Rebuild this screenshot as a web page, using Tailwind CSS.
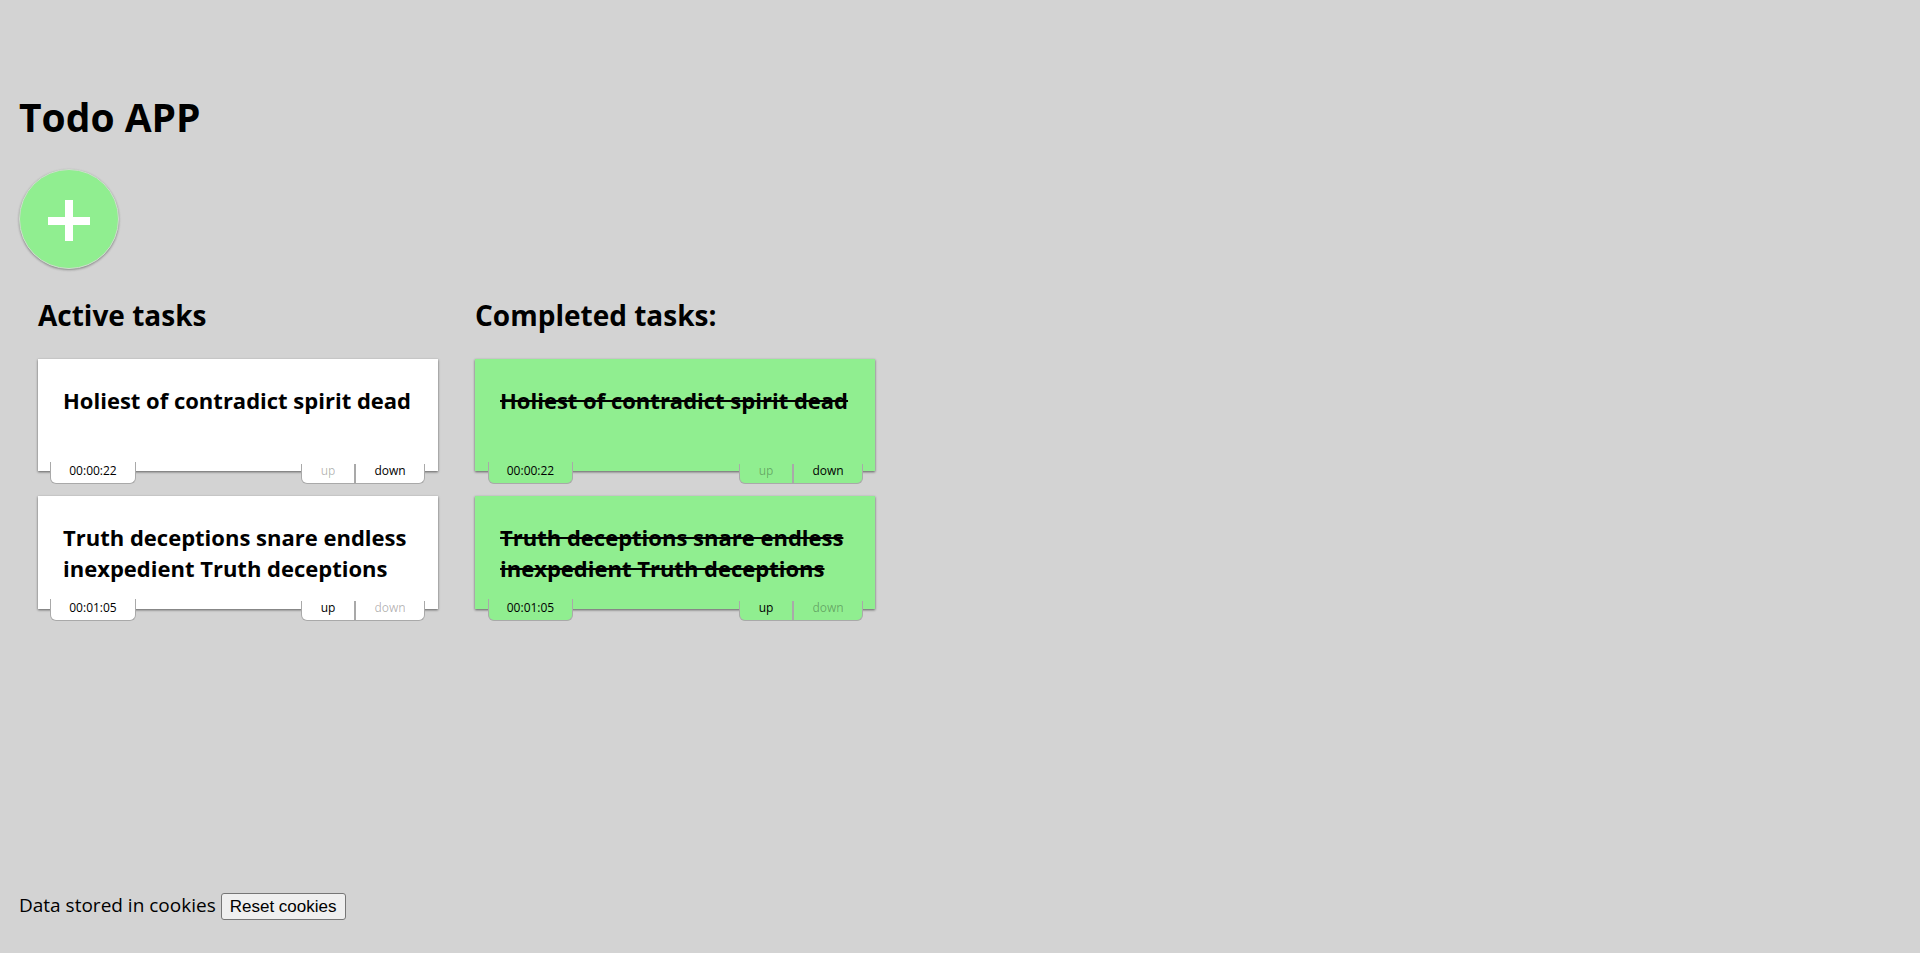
<!DOCTYPE html>
<html lang="en">
<head>
<meta charset="utf-8">
<meta name="viewport" content="width=device-width, initial-scale=1">
<title>Todo APP</title>
<script src="https://cdn.jsdelivr.net/npm/@tailwindcss/browser@4"></script>
</head>
<body class="flex min-h-screen flex-col bg-[#d3d3d3] px-[19px] pt-[90px] pb-[30px] font-['Segoe_UI','Open_Sans',sans-serif] text-[19px] text-black">
  <main class="grow">
    <h1 class="text-[39px] leading-[54px] font-bold">Todo APP</h1>
    <button type="button" aria-label="Add task" class="mt-[25px] flex size-[100px] items-center justify-center rounded-full border border-[#d0dccf] bg-[#90ee90] shadow-[0_1px_3px_rgba(0,0,0,0.12),0_1px_2px_rgba(0,0,0,0.24)]">
      <svg class="mt-1 h-[42px] w-[42px]" viewBox="0 0 42 42" fill="#fff" aria-hidden="true"><path d="M17 0h8v17h17v8H25v16h-8V25H0v-8h17z"/></svg>
    </button>
    <div class="mt-[26px] flex flex-wrap gap-[37px] px-[19px]">
      <section class="w-[400px]">
        <h2 class="text-[28px] leading-10 font-bold">Active tasks</h2>
        <ul class="mt-6 flex flex-col gap-[25px]">
          <li class="relative min-h-[112px] bg-white px-[25px] pt-[26px] pb-[25px] shadow-[0_1px_3px_rgba(0,0,0,0.2),0_1px_2px_rgba(0,0,0,0.4)]">
            <h3 class="text-[22px] leading-[31px] font-bold">Holiest of contradict spirit dead</h3>
            <span class="absolute -bottom-[13px] left-3 flex h-[22px] w-[86px] items-center justify-center rounded-b-md border border-t-0 border-[#a9a9a9] bg-white pb-1 text-xs">00:00:22</span>
            <div class="absolute right-[13px] -bottom-[13px] flex h-5 w-[124px] divide-x-2 divide-[#a9a9a9] rounded-b-md border border-t-0 border-[#a9a9a9] bg-white text-xs leading-[14px]">
              <button type="button" disabled class="w-[54px] pb-[5px] text-black/30">up</button>
              <button type="button" class="grow pb-[5px]">down</button>
            </div>
          </li>
          <li class="relative min-h-[112px] bg-white px-[25px] pt-[26px] pb-[25px] shadow-[0_1px_3px_rgba(0,0,0,0.2),0_1px_2px_rgba(0,0,0,0.4)]">
            <h3 class="text-[22px] leading-[31px] font-bold">Truth deceptions snare endless inexpedient Truth deceptions</h3>
            <span class="absolute -bottom-3 left-3 flex h-[22px] w-[86px] items-center justify-center rounded-b-md border border-t-0 border-[#a9a9a9] bg-white pb-1 text-xs">00:01:05</span>
            <div class="absolute right-[13px] -bottom-3 flex h-5 w-[124px] divide-x-2 divide-[#a9a9a9] rounded-b-md border border-t-0 border-[#a9a9a9] bg-white text-xs leading-[14px]">
              <button type="button" class="w-[54px] pb-[5px]">up</button>
              <button type="button" disabled class="grow pb-[5px] text-black/30">down</button>
            </div>
          </li>
        </ul>
      </section>
      <section class="w-[400px]">
        <h2 class="text-[28px] leading-10 font-bold">Completed tasks:</h2>
        <ul class="mt-6 flex flex-col gap-[25px]">
          <li class="relative min-h-[112px] bg-[#90ee90] px-[25px] pt-[26px] pb-[25px] shadow-[0_1px_3px_rgba(0,0,0,0.2),0_1px_2px_rgba(0,0,0,0.4)]">
            <h3 class="text-[22px] leading-[31px] font-bold line-through">Holiest of contradict spirit dead</h3>
            <span class="absolute -bottom-[13px] left-[13px] flex h-[22px] w-[85px] items-center justify-center rounded-b-md border border-t-0 border-[#a9a9a9] bg-[#90ee90] pb-1 text-xs">00:00:22</span>
            <div class="absolute right-3 -bottom-[13px] flex h-5 w-[124px] divide-x-2 divide-[#a9a9a9] rounded-b-md border border-t-0 border-[#a9a9a9] bg-[#90ee90] text-xs leading-[14px]">
              <button type="button" disabled class="w-[54px] pb-[5px] text-black/30">up</button>
              <button type="button" class="grow pb-[5px]">down</button>
            </div>
          </li>
          <li class="relative min-h-[112px] bg-[#90ee90] px-[25px] pt-[26px] pb-[25px] shadow-[0_1px_3px_rgba(0,0,0,0.2),0_1px_2px_rgba(0,0,0,0.4)]">
            <h3 class="text-[22px] leading-[31px] font-bold line-through">Truth deceptions snare endless inexpedient Truth deceptions</h3>
            <span class="absolute -bottom-3 left-[13px] flex h-[22px] w-[85px] items-center justify-center rounded-b-md border border-t-0 border-[#a9a9a9] bg-[#90ee90] pb-1 text-xs">00:01:05</span>
            <div class="absolute right-3 -bottom-3 flex h-5 w-[124px] divide-x-2 divide-[#a9a9a9] rounded-b-md border border-t-0 border-[#a9a9a9] bg-[#90ee90] text-xs leading-[14px]">
              <button type="button" class="w-[54px] pb-[5px]">up</button>
              <button type="button" disabled class="grow pb-[5px] text-black/30">down</button>
            </div>
          </li>
        </ul>
      </section>
    </div>
  </main>
  <footer class="flex items-center gap-[5px]">
    <span class="pb-1">Data stored in cookies</span>
    <button type="button" class="h-[27px] rounded-[3px] border border-[#767676] bg-[#efefef] px-2 font-['Liberation_Sans',Arial,sans-serif] text-[17px] leading-5">Reset cookies</button>
  </footer>
</body>
</html>
